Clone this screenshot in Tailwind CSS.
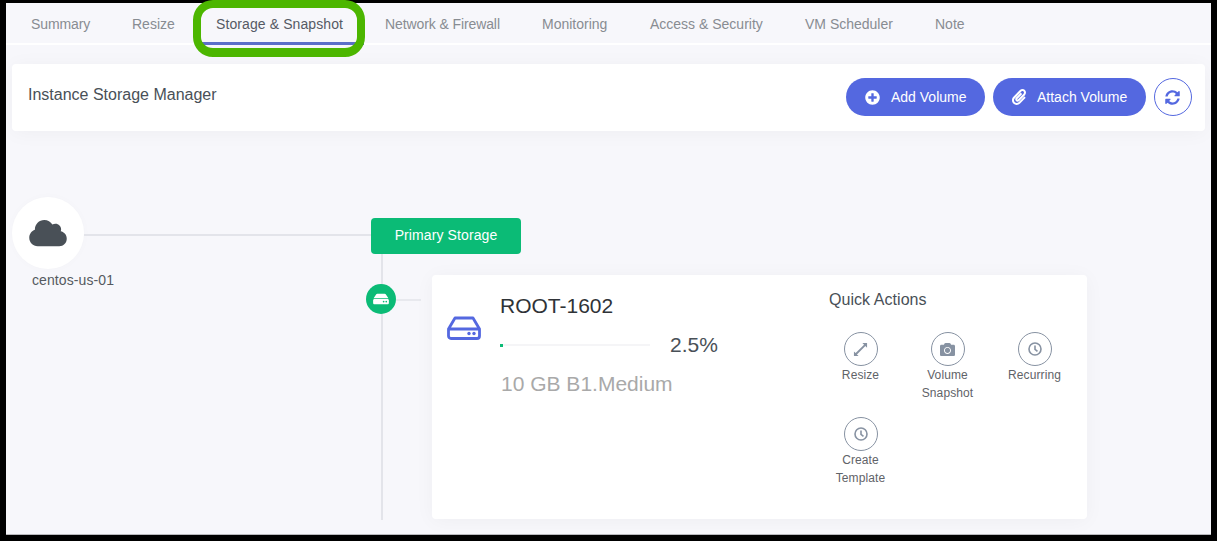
<!DOCTYPE html>
<html lang="en">
<head>
  <meta charset="UTF-8" />
  <title>Instance Storage Manager</title>
  <script src="https://cdn.jsdelivr.net/npm/@tailwindcss/browser@4"></script>
</head>
<body class="bg-black w-[1217px] h-[541px] overflow-hidden pl-[6px] pr-[6px] pt-[3px] font-['Liberation_Sans',Arial,sans-serif]">
  <div class="h-[532px] bg-[#f7f7fb] border-b border-[#b9b9bd]">

    <!-- Tabs -->
    <nav class="flex h-[42px] px-[4px] border-b-2 border-white text-sm text-[#888c92]">
      <a class="w-[101px] pl-[21px] leading-[42px] tracking-[-0.1px]">Summary</a>
      <a class="w-[84px] pl-[21px] leading-[42px]">Resize</a>
      <a class="relative w-[169px] h-[42px] pl-[21px] leading-[42px] tracking-[0.1px] text-[#555a64] border-b-[3px] border-[#5b6fc9]">
        Storage &amp; Snapshot
        <span class="absolute left-[-2px] right-[-1px] top-[-3px] h-[57px] rounded-[20px] border-[8px] border-b-[9px] border-[#4cb600]"></span>
      </a>
      <a class="w-[157px] pl-[21px] leading-[42px] tracking-[-0.1px]">Network &amp; Firewall</a>
      <a class="w-[108px] pl-[21px] leading-[42px]">Monitoring</a>
      <a class="w-[155px] pl-[21px] leading-[42px]">Access &amp; Security</a>
      <a class="w-[130px] pl-[21px] leading-[42px]">VM Scheduler</a>
      <a class="pl-[21px] leading-[42px]">Note</a>
    </nav>

    <!-- Header -->
    <div class="flex justify-between h-[67px] mx-[6px] mt-[19px] pl-[16px] pr-[13px] pt-[14px] bg-white rounded shadow-[0_2px_20px_rgba(0,0,0,0.04)]">
      <h2 class="pt-px text-base leading-[32px] text-[#495057]">Instance Storage Manager</h2>
      <div class="flex gap-[8px] text-sm text-white">
        <button class="flex items-center w-[139px] h-[38px] pl-[19px] rounded-full bg-[#5468e0]">
          <svg class="w-[15px] h-[15px] mr-[11px]" viewBox="0 0 512 512" fill="currentColor"><path d="M256 8C119 8 8 119 8 256s111 248 248 248 248-111 248-248S393 8 256 8zm144 276c0 6.6-5.4 12-12 12h-92v92c0 6.6-5.4 12-12 12h-56c-6.6 0-12-5.4-12-12v-92h-92c-6.6 0-12-5.4-12-12v-56c0-6.6 5.4-12 12-12h92v-92c0-6.6 5.4-12 12-12h56c6.6 0 12 5.4 12 12v92h92c6.6 0 12 5.4 12 12v56z"/></svg>
          Add Volume
        </button>
        <button class="flex items-center w-[153px] h-[38px] pl-[19px] rounded-full bg-[#5468e0]">
          <svg class="w-[14px] h-[16px] mr-[11px]" viewBox="0 0 448 512" fill="currentColor"><path d="M43.246 466.142c-58.43-60.289-57.341-157.511 1.386-217.581L254.392 34c44.316-45.332 116.351-45.336 160.671 0 43.89 44.894 43.943 117.329 0 162.276L232.214 383.128c-29.855 30.537-78.633 30.111-107.982-.998-28.275-29.97-27.368-77.473 1.452-106.953l143.743-146.835c6.182-6.314 16.312-6.422 22.626-.241l22.861 22.379c6.315 6.182 6.422 16.312.241 22.626L171.427 319.927c-4.932 5.045-5.236 13.428-.648 18.292 4.372 4.634 11.245 4.711 15.688.165l182.849-186.851c19.613-20.062 19.613-52.725-.011-72.798-19.189-19.627-49.957-19.637-69.154 0L90.39 293.295c-34.763 35.56-35.299 93.12-1.191 128.313 34.01 35.093 88.985 35.137 123.058.286l172.06-175.999c6.177-6.319 16.307-6.433 22.626-.256l22.877 22.364c6.319 6.177 6.434 16.307.256 22.626l-172.06 175.998c-59.576 60.938-155.943 60.216-214.77-.485z"/></svg>
          Attach Volume
        </button>
        <button class="flex items-center justify-center w-[38px] h-[38px] rounded-full border border-[#5468e0] text-[#5468e0]">
          <svg class="w-[15px] h-[15px] -ml-[2px]" viewBox="0 0 512 512" fill="currentColor"><path d="M370.72 133.28C339.458 104.008 298.888 87.962 255.848 88c-77.458.068-144.328 53.178-162.791 126.85-1.344 5.363-6.122 9.15-11.651 9.15H24.103c-7.498 0-13.194-6.807-11.807-14.176C33.933 94.924 134.813 8 256 8c66.448 0 126.791 26.136 171.315 68.685L463.03 40.97C478.149 25.851 504 36.559 504 57.941V192c0 13.255-10.745 24-24 24H345.941c-21.382 0-32.09-25.851-16.971-40.971l41.75-41.749zM32 296h134.059c21.382 0 32.09 25.851 16.971 40.971l-41.75 41.75c31.262 29.273 71.835 45.319 114.876 45.28 77.418-.07 144.315-53.144 162.787-126.849 1.344-5.363 6.122-9.15 11.651-9.15h57.304c7.498 0 13.194 6.807 11.807 14.176C478.067 417.076 377.187 504 256 504c-66.448 0-126.791-26.136-171.315-68.685L48.97 471.03C33.851 486.149 8 475.441 8 454.059V320c0-13.255 10.745-24 24-24z"/></svg>
        </button>
      </div>
    </div>

    <!-- Storage tree -->
    <div class="flex items-start ml-[6px] mt-[66px]">
      <div class="w-[72px]">
        <div class="flex items-center justify-center w-[72px] h-[72px] rounded-full bg-white shadow-[0_0_10px_rgba(0,0,0,0.02)]">
          <svg class="w-[38px] h-[30px] text-[#495057]" viewBox="0 0 640 512" fill="currentColor"><path d="M537.6 226.6c4.1-10.7 6.4-22.4 6.4-34.6 0-53-43-96-96-96-19.7 0-38.1 6-53.3 16.2C367 64.2 315.3 32 256 32c-88.4 0-160 71.6-160 160 0 2.7.1 5.4.2 8.1C40.2 219.8 0 273.2 0 336c0 79.5 64.5 144 144 144h368c70.7 0 128-57.3 128-128 0-61.9-44-113.6-102.4-125.4z"/></svg>
        </div>
        <p class="mt-px pl-[20px] text-sm leading-5 tracking-[0.1px] whitespace-nowrap text-[#555a60]">centos-us-01</p>
      </div>
      <div class="w-[287px] h-[2px] mt-[37px] bg-[#e3e4ea]"></div>

      <div class="mt-[21px]">
        <div class="flex items-center justify-center w-[150px] h-[36px] pb-[2px] rounded bg-[#0bbb76] text-sm tracking-[0.1px] text-white">Primary Storage</div>

        <div class="relative flex items-start">
          <div class="absolute left-[10px] top-0 w-[2px] h-[266px] bg-[#e3e4ea]"></div>
          <div class="relative flex items-center justify-center w-[30px] h-[30px] -ml-[5px] mt-[30px] rounded-full bg-[#0bbb76]">
            <svg class="w-[16px] h-[14px] text-white" viewBox="0 0 576 512" fill="currentColor"><path d="M576 304v96c0 26.51-21.49 48-48 48H48c-26.51 0-48-21.49-48-48v-96c0-26.51 21.49-48 48-48h480c26.51 0 48 21.49 48 48zm-48-80a79.557 79.557 0 0 1 30.777 6.165L462.25 85.374A48.003 48.003 0 0 0 422.311 64H153.689a48 48 0 0 0-39.938 21.374L17.223 230.165A79.557 79.557 0 0 1 48 224h480zm-48 96c-17.673 0-32 14.327-32 32s14.327 32 32 32 32-14.327 32-32-14.327-32-32-32zm-96 0c-17.673 0-32 14.327-32 32s14.327 32 32 32 32-14.327 32-32-14.327-32-32-32z"/></svg>
          </div>
          <div class="w-[25px] h-[2px] mt-[45px] bg-[#e8e9ee]"></div>

          <!-- Volume card -->
          <div class="flex w-[655px] h-[244px] ml-[11px] mt-[21px] bg-white rounded-sm shadow-[0_2px_20px_rgba(0,0,0,0.04)]">
            <svg class="w-[34px] h-[24px] ml-[15px] mt-[41px] text-[#5468e0]" viewBox="0 0 34 24" fill="none" stroke="currentColor" stroke-width="2.8" stroke-linejoin="round">
              <path d="M1.5 13 L8 2 H26 L32.5 13 V20 a2.5 2.5 0 0 1 -2.5 2.5 H4 a2.5 2.5 0 0 1 -2.5 -2.5 Z M1.5 13 H32.5"/>
              <circle cx="22" cy="17.5" r="1.7" fill="currentColor" stroke="none"/>
              <circle cx="27" cy="17.5" r="1.7" fill="currentColor" stroke="none"/>
            </svg>

            <div class="w-[317px] ml-[19px] pt-[17px]">
              <h3 class="text-[21px] leading-7 text-[#2f3337]">ROOT-1602</h3>
              <div class="flex items-center mt-[11px]">
                <div class="w-[150px] h-[2px] bg-[#f5f5f7]"><div class="w-[3px] h-[3px] bg-[#0bbb76]"></div></div>
                <span class="ml-[20px] text-[21px] leading-7 text-[#495057]">2.5%</span>
              </div>
              <p class="mt-[11px] pl-px text-[21px] leading-7 text-[#a9a9a9]">10 GB B1.Medium</p>
            </div>

            <div class="w-[261px] pt-[13px]">
              <h4 class="pl-[12px] text-base leading-6 tracking-[0.05px] text-[#495057]">Quick Actions</h4>
              <div class="grid grid-cols-3 gap-y-[15px] mt-[20px] text-xs leading-[18px] tracking-[0.1px] text-center text-[#5f6368]">
                <div class="flex flex-col items-center">
                  <span class="flex items-center justify-center w-[34px] h-[34px] rounded-full border border-[#8792a2] text-[#8792a2]">
                    <svg class="w-[15px] h-[15px]" viewBox="0 0 16 16" fill="currentColor"><path d="M10 1 H15 V6 L13.2 4.2 L4.2 13.2 L6 15 H1 V10 L2.8 11.8 L11.8 2.8 Z"/></svg>
                  </span>
                  <span>Resize</span>
                </div>
                <div class="flex flex-col items-center">
                  <span class="flex items-center justify-center w-[34px] h-[34px] rounded-full border border-[#8792a2] text-[#8792a2]">
                    <svg class="w-[15px] h-[15px]" viewBox="0 0 512 512" fill="currentColor"><path d="M512 144v288c0 26.5-21.5 48-48 48H48c-26.5 0-48-21.5-48-48V144c0-26.5 21.5-48 48-48h88l12.3-32.9c7-18.7 24.9-31.1 44.9-31.1h125.5c20 0 37.9 12.4 44.9 31.1L376 96h88c26.5 0 48 21.5 48 48zM376 288c0-66.2-53.8-120-120-120s-120 53.8-120 120 53.8 120 120 120 120-53.8 120-120zm-32 0c0 48.5-39.5 88-88 88s-88-39.5-88-88 39.5-88 88-88 88 39.5 88 88z"/></svg>
                  </span>
                  <span>Volume<br />Snapshot</span>
                </div>
                <div class="flex flex-col items-center">
                  <span class="flex items-center justify-center w-[34px] h-[34px] rounded-full border border-[#8792a2] text-[#8792a2]">
                    <svg class="w-[14px] h-[14px]" viewBox="0 0 14 14" fill="none" stroke="currentColor" stroke-width="1.6"><circle cx="7" cy="7" r="6"/><path d="M7 3.5 V7.3 L9.5 9.3"/></svg>
                  </span>
                  <span>Recurring</span>
                </div>
                <div class="flex flex-col items-center">
                  <span class="flex items-center justify-center w-[34px] h-[34px] rounded-full border border-[#8792a2] text-[#8792a2]">
                    <svg class="w-[14px] h-[14px]" viewBox="0 0 14 14" fill="none" stroke="currentColor" stroke-width="1.6"><circle cx="7" cy="7" r="6"/><path d="M7 3.5 V7.3 L9.5 9.3"/></svg>
                  </span>
                  <span>Create<br />Template</span>
                </div>
              </div>
            </div>
          </div>
        </div>
      </div>
    </div>
  </div>
</body>
</html>
